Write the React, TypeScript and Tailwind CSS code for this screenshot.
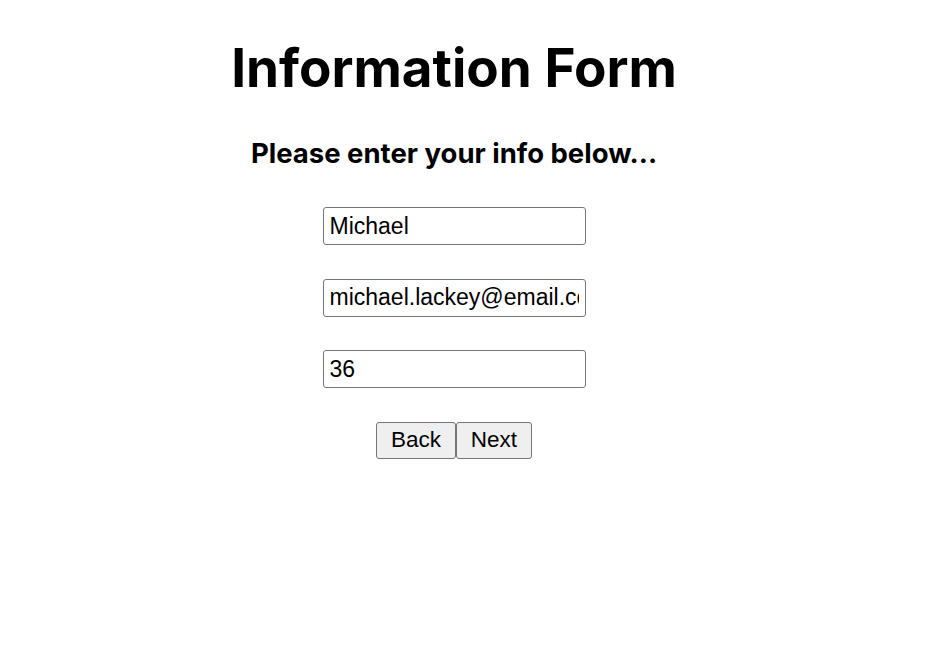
import React from "react";

export default function App() {
  return (
    <div className="w-[908px] flex flex-col items-center bg-white min-h-[657px]">
      <h1 className="mt-[32px] text-[53px] leading-[72px] font-bold text-black" style={{ fontFamily: "Inter, sans-serif" }}>
        Information Form
      </h1>
      <h2 className="mt-[33px] text-[27.5px] leading-[32px] font-bold text-black" style={{ fontFamily: "Inter, sans-serif" }}>
        Please enter your info below...
      </h2>
      <div className="mt-[38px] flex flex-col items-center gap-[33.5px]" style={{ fontFamily: "'Liberation Sans', Arial, sans-serif" }}>
        <input
          readOnly
          value="Michael"
          className="w-[263px] h-[38px] border border-[#767676] rounded-[3px] px-[6px] text-[23px] text-black outline-none"
        />
        <input
          readOnly
          value="michael.lackey@email.com"
          className="w-[263px] h-[38px] border border-[#767676] rounded-[3px] px-[6px] text-[23px] text-black outline-none"
        />
        <input
          readOnly
          value="36"
          className="w-[263px] h-[38px] border border-[#767676] rounded-[3px] px-[6px] text-[23px] text-black outline-none"
        />
        <div className="flex">
          <button className="h-[37px] w-[80px] border border-[#767676] rounded-[3px] bg-[#efefef] text-[22.5px] text-black">Back</button>
          <button className="h-[37px] w-[76px] border border-[#767676] rounded-[3px] bg-[#efefef] text-[22.5px] text-black">Next</button>
        </div>
      </div>
    </div>
  );
}
